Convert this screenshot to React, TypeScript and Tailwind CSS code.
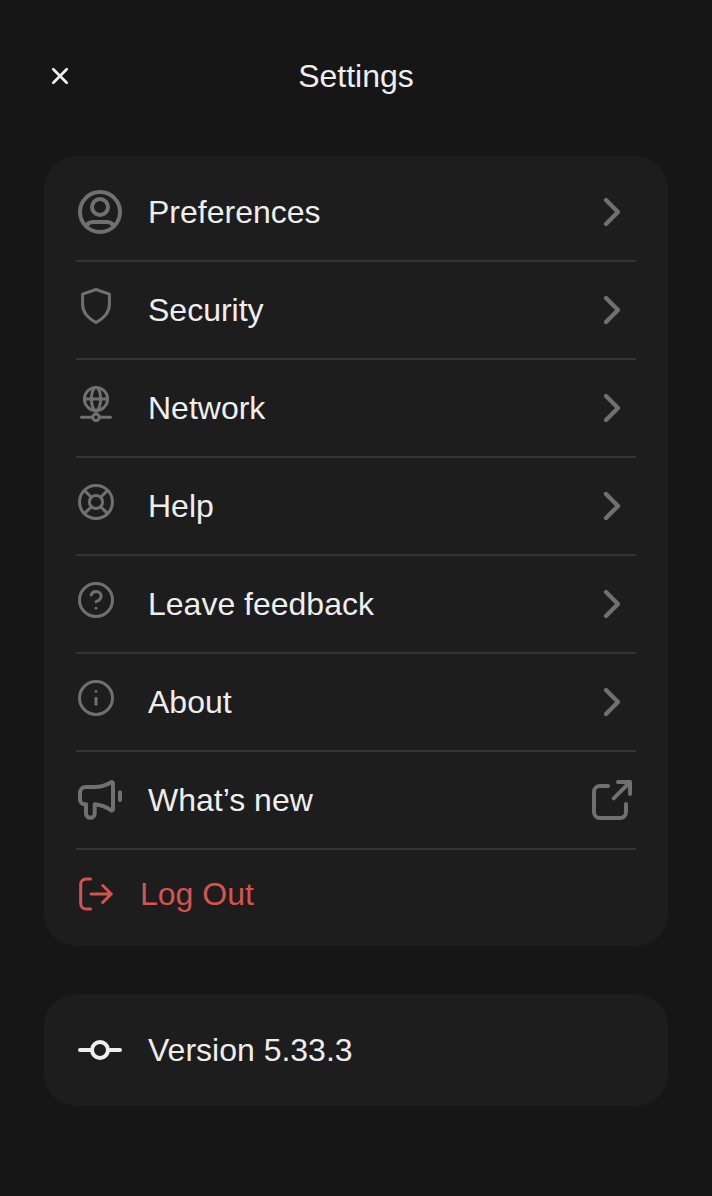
import type { ReactNode } from 'react';

type IconProps = { size: 40 | 48; stroke: number; children: ReactNode };

function Icon({ size, stroke, children }: IconProps) {
  return (
    <svg
      width={size}
      height={size}
      viewBox={`0 0 ${size} ${size}`}
      fill="none"
      stroke="currentColor"
      strokeWidth={stroke}
      strokeLinecap="round"
      strokeLinejoin="round"
      className="shrink-0"
    >
      {children}
    </svg>
  );
}

const UserIcon = () => (
  <Icon size={48} stroke={4}>
    <circle cx="24" cy="24" r="20" />
    <circle cx="24" cy="19" r="8" />
    <path d="M10.500 37.200C12 35.200 14.500 34 17.500 34h13c3 0 5.500 1.200 7 3.200" />
  </Icon>
);

const ShieldIcon = () => (
  <Icon size={40} stroke={3}>
    <path d="M20 3.500 33.400 8.100V18.500C33.400 26.800 27.500 32.400 20 36.500 12.500 32.400 6.600 26.800 6.600 18.500V8.100Z" />
  </Icon>
);

const NetworkIcon = () => (
  <Icon size={40} stroke={3}>
    <circle cx="20" cy="15" r="11.6" />
    <ellipse cx="20" cy="15" rx="4.6" ry="11.6" />
    <path d="M8.400 15h23.200M20 26.700v3M5.500 33.300h11.200M23.300 33.300h11.200" />
    <circle cx="20" cy="33.3" r="3.3" />
  </Icon>
);

const LifebuoyIcon = () => (
  <Icon size={40} stroke={3}>
    <circle cx="20" cy="20" r="16.5" />
    <circle cx="20" cy="20" r="6.600" />
    <path d="m8.400 8.400 6.900 6.900M24.700 24.700l6.900 6.900M31.600 8.400l-6.900 6.900M15.300 24.700l-6.900 6.900" />
  </Icon>
);

const QuestionIcon = () => (
  <Icon size={40} stroke={3}>
    <circle cx="20" cy="20" r="16.5" />
    <path d="M15.100 15c.8-2.200 2.700-3.500 5-3.500 2.900 0 5 2 5 4.700 0 3.400-5 5.400-5 5.400" />
    <circle cx="20" cy="28.200" r="1.4" fill="currentColor" stroke="none" />
  </Icon>
);

const InfoIcon = () => (
  <Icon size={40} stroke={3}>
    <circle cx="20" cy="20" r="16.5" />
    <path d="M20 20.200v6" />
    <circle cx="20" cy="13.400" r="1.400" fill="currentColor" stroke="none" />
  </Icon>
);

const MegaphoneIcon = () => (
  <Icon size={48} stroke={4}>
    <path d="M10 11h8c6.500 0 12.500-1.800 16.800-4.500 1.300-.8 2.200-.2 2.200 1.100v25.300c0 1.500-1 1.800-2.200 1.200C30.500 31 25.500 28.800 18.700 28.200V37.500a4.350 4.350 0 0 1-8.700 0V28.200H8.500C5.800 28.200 4 26 4 23v-6c0-3.600 2.400-6 6-6Z" />
    <path d="M44 16.300v7.700" />
  </Icon>
);

const LogOutIcon = () => (
  <Icon size={40} stroke={3}>
    <path d="M14.500 5H10a5.300 5.300 0 0 0-5.300 5.300v19.400A5.300 5.300 0 0 0 10 35h4.500" />
    <path d="M15 20h20.300M26.700 11.500 35.300 20l-8.600 8.500" />
  </Icon>
);

const CommitIcon = () => (
  <Icon size={48} stroke={4}>
    <circle cx="24" cy="24" r="8" />
    <path d="M4 24h12M32 24h12" />
  </Icon>
);

const ChevronIcon = () => (
  <Icon size={48} stroke={4.3}>
    <path d="m18 12 12 12-12 12" />
  </Icon>
);

const ExternalIcon = () => (
  <Icon size={48} stroke={4}>
    <path d="M20 10h-8a6 6 0 0 0-6 6v20a6 6 0 0 0 6 6h20a6 6 0 0 0 6-6v-8" />
    <path d="M25.700 22.300 42 6M30 6h12v12" />
  </Icon>
);

const items = [
  { label: 'Preferences', icon: <UserIcon /> },
  { label: 'Security', icon: <ShieldIcon /> },
  { label: 'Network', icon: <NetworkIcon /> },
  { label: 'Help', icon: <LifebuoyIcon /> },
  { label: 'Leave feedback', icon: <QuestionIcon /> },
  { label: 'About', icon: <InfoIcon /> },
  { label: 'What’s new', icon: <MegaphoneIcon />, external: true },
];

export default function App() {
  return (
    <div className="min-h-screen bg-[#161616] px-11 font-['Liberation_Sans',Arial,sans-serif] text-[32px] leading-10 text-[#eeeeee]">
      <header className="grid h-[156px] grid-cols-[32px_1fr_32px] items-center pb-1">
        <button type="button" aria-label="Close" className="flex justify-center">
          <svg width="32" height="32" viewBox="0 0 32 32" fill="none" stroke="currentColor" strokeWidth="2.7" strokeLinecap="round">
            <path d="m9.300 9.300 13.400 13.400M22.700 9.300 9.300 22.700" />
          </svg>
        </button>
        <h1 className="text-center">Settings</h1>
      </header>

      <main>
        <nav className="rounded-[32px] bg-[#1d1d1d] px-8 py-2">
          {items.map((item) => (
            <button
              key={item.label}
              type="button"
              className="flex h-[98px] w-full items-center gap-6 border-b-2 border-[#343434] text-left"
            >
              <span className="size-12 shrink-0 text-[#707070]">{item.icon}</span>
              <span className="flex-1">{item.label}</span>
              <span className="text-[#707070]">{item.external ? <ExternalIcon /> : <ChevronIcon />}</span>
            </button>
          ))}
          <button type="button" className="flex h-[88px] w-full items-center gap-6 text-left text-[#d65352]">
            <LogOutIcon />
            <span>Log Out</span>
          </button>
        </nav>

        <section className="mt-12 flex h-28 items-center gap-6 rounded-[32px] bg-[#1d1d1d] px-8">
          <CommitIcon />
          <span>Version 5.33.3</span>
        </section>
      </main>
    </div>
  );
}
